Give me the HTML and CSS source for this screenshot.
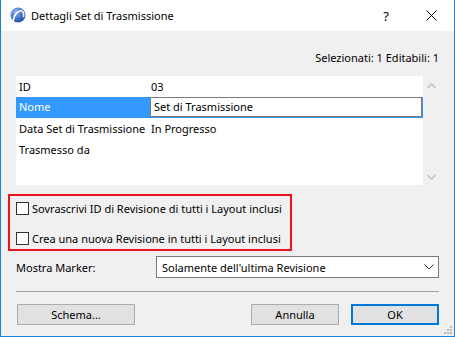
FILE: index.html
```html
<!DOCTYPE html>
<html>
<head>
<meta charset="utf-8">
<link rel="stylesheet" href="styles.css">
</head>
<body>
<div class="window">
  <div class="titlebar">
    <svg class="appicon" width="16" height="16" viewBox="0 0 16 16">
      <defs>
        <radialGradient id="g" cx="0.35" cy="0.3" r="0.8">
          <stop offset="0" stop-color="#8fb4ec"/>
          <stop offset="0.6" stop-color="#3e6fc4"/>
          <stop offset="1" stop-color="#1f4a9c"/>
        </radialGradient>
      </defs>
      <circle cx="8" cy="8" r="7.5" fill="url(#g)"/>
      <path d="M3.2 13.5 C4.5 7 8 3.6 11.2 3.8 C13.2 4 14 6.5 13.6 9.5" fill="none" stroke="#fff" stroke-width="1.6" stroke-linecap="round"/>
    </svg>
    <span class="title">Dettagli Set di Trasmissione</span>
    <span class="tb-btn help">?</span>
    <span class="tb-btn close">
      <svg width="11" height="11" viewBox="0 0 11 11"><path d="M0.5 0.5 L10.5 10.5 M10.5 0.5 L0.5 10.5" stroke="#000" stroke-width="1"/></svg>
    </span>
  </div>
  <div class="content">
    <div class="status">Selezionati: 1 Editabili: 1</div>
    <div class="listwrap">
      <div class="list">
        <div class="row"><span class="lbl">ID</span><span class="val">03</span></div>
        <div class="row sel"><span class="lbl">Nome</span><span class="edit">Set di Trasmissione</span></div>
        <div class="row"><span class="lbl">Data Set di Trasmissione</span><span class="val">In Progresso</span></div>
        <div class="row"><span class="lbl">Trasmesso da</span><span class="val"></span></div>
      </div>
      <div class="scroll">
        <svg width="9" height="6" viewBox="0 0 9 6"><path d="M0.5 5 L4.5 1 L8.5 5" fill="none" stroke="#c4c4c4" stroke-width="1.6"/></svg>
        <svg width="9" height="6" viewBox="0 0 9 6"><path d="M0.5 1 L4.5 5 L8.5 1" fill="none" stroke="#c4c4c4" stroke-width="1.6"/></svg>
      </div>
    </div>
    <div class="checks">
      <label class="check"><span class="box"></span><span>Sovrascrivi ID di Revisione di tutti i Layout inclusi</span></label>
      <label class="check"><span class="box"></span><span>Crea una nuova Revisione in tutti i Layout inclusi</span></label>
    </div>
    <div class="marker">
      <span class="mlabel">Mostra Marker:</span>
      <div class="select">
        <span>Solamente dell'ultima Revisione</span>
        <svg width="10" height="6" viewBox="0 0 10 6"><path d="M0.5 0.5 L5 5 L9.5 0.5" fill="none" stroke="#333" stroke-width="1"/></svg>
      </div>
    </div>
    <div class="sep"></div>
    <div class="buttons">
      <button class="btn schema">Schema...</button>
      <span class="spacer"></span>
      <button class="btn annulla">Annulla</button>
      <button class="btn ok">OK</button>
    </div>
  </div>
  <svg class="grip" width="10" height="10" viewBox="0 0 10 10">
    <rect x="7" y="1" width="2" height="2" fill="#b9b9b9"/>
    <rect x="4" y="4" width="2" height="2" fill="#b9b9b9"/>
    <rect x="7" y="4" width="2" height="2" fill="#b9b9b9"/>
    <rect x="1" y="7" width="2" height="2" fill="#b9b9b9"/>
    <rect x="4" y="7" width="2" height="2" fill="#b9b9b9"/>
    <rect x="7" y="7" width="2" height="2" fill="#b9b9b9"/>
  </svg>
</div>
</body>
</html>
```

FILE: styles.css
```css
* { box-sizing: border-box; }
html, body { margin: 0; padding: 0; }
body {
  font-family: "Noto Sans", "DejaVu Sans", sans-serif;
  font-size: 11px;
  color: #000;
  background: #fff;
}
.window {
  position: relative;
  width: 455px;
  height: 337px;
  background: #f0f0f0;
  border: 1px solid #1883d7;
  border-top: none;
  display: flex;
  flex-direction: column;
}
.titlebar {
  height: 31px;
  background: #fff;
  display: flex;
  align-items: center;
  padding-left: 9px;
}
.appicon { margin-top: -1px; }
.title { margin-left: 5px; flex: 1; font-size: 11px; }
.tb-btn {
  width: 46px;
  height: 31px;
  display: flex;
  align-items: center;
  justify-content: center;
}
.help { font-size: 13px; }
.close { width: 45px; }
.content {
  flex: 1;
  display: flex;
  flex-direction: column;
  padding: 0 15px 0 15px;
}
.status {
  margin-top: 19px;
  height: 16px;
  line-height: 16px;
  text-align: right;
}
.listwrap {
  margin-top: 10px;
  height: 109px;
  display: flex;
}
.list {
  width: 407px;
  background: #fff;
  padding-top: 0;
}
.row {
  height: 21px;
  display: flex;
  align-items: center;
}
.lbl {
  width: 134px;
  padding-left: 3px;
  white-space: nowrap;
}
.val { padding-left: 1px; }
.row.sel {
  background: #3399ff;
  align-items: flex-start;
}
.row.sel .lbl { color: #fff; line-height: 20px; }
.edit {
  width: 272px;
  height: 20px;
  line-height: 18px;
  border: 1px solid #7a7a7a;
  background: #fff;
  padding-left: 3px;
}
.scroll {
  width: 16px;
  display: flex;
  flex-direction: column;
  align-items: center;
  justify-content: space-between;
  padding: 7px 0 5px 1px;
}
.checks {
  margin-top: 9px;
  margin-left: -8px;
  width: 284px;
  height: 57px;
  border: 2px solid #e8141e;
  padding: 4px 0 0 6px;
  display: flex;
  flex-direction: column;
  gap: 13px;
}
.check {
  height: 17px;
  display: flex;
  align-items: center;
  white-space: nowrap;
}
.box {
  width: 13px;
  height: 13px;
  border: 1px solid #333;
  background: #fff;
  margin-right: 3px;
  flex: none;
}
.marker {
  margin-top: 5px;
  height: 22px;
  display: flex;
  align-items: center;
}
.mlabel { width: 140px; }
.select {
  flex: 1;
  height: 22px;
  border: 1px solid #7a7a7a;
  background: #fff;
  display: flex;
  align-items: center;
  justify-content: space-between;
  padding: 0 4px 0 5px;
}
.sep {
  margin-top: 13px;
  height: 1px;
  background: #a0a0a0;
}
.buttons {
  margin-top: 12px;
  display: flex;
  height: 21px;
}
.btn {
  font-family: inherit;
  font-size: 11px;
  color: #000;
  height: 21px;
  background: #e1e1e1;
  border: 1px solid #adadad;
  padding: 0;
  margin: 0;
}
.schema { width: 118px; margin-left: 1px; }
.spacer { flex: 1; }
.annulla { width: 88px; margin-right: 12px; }
.ok { width: 88px; border: 2px solid #0078d7; }
.grip {
  position: absolute;
  right: 1px;
  bottom: 1px;
}
```
